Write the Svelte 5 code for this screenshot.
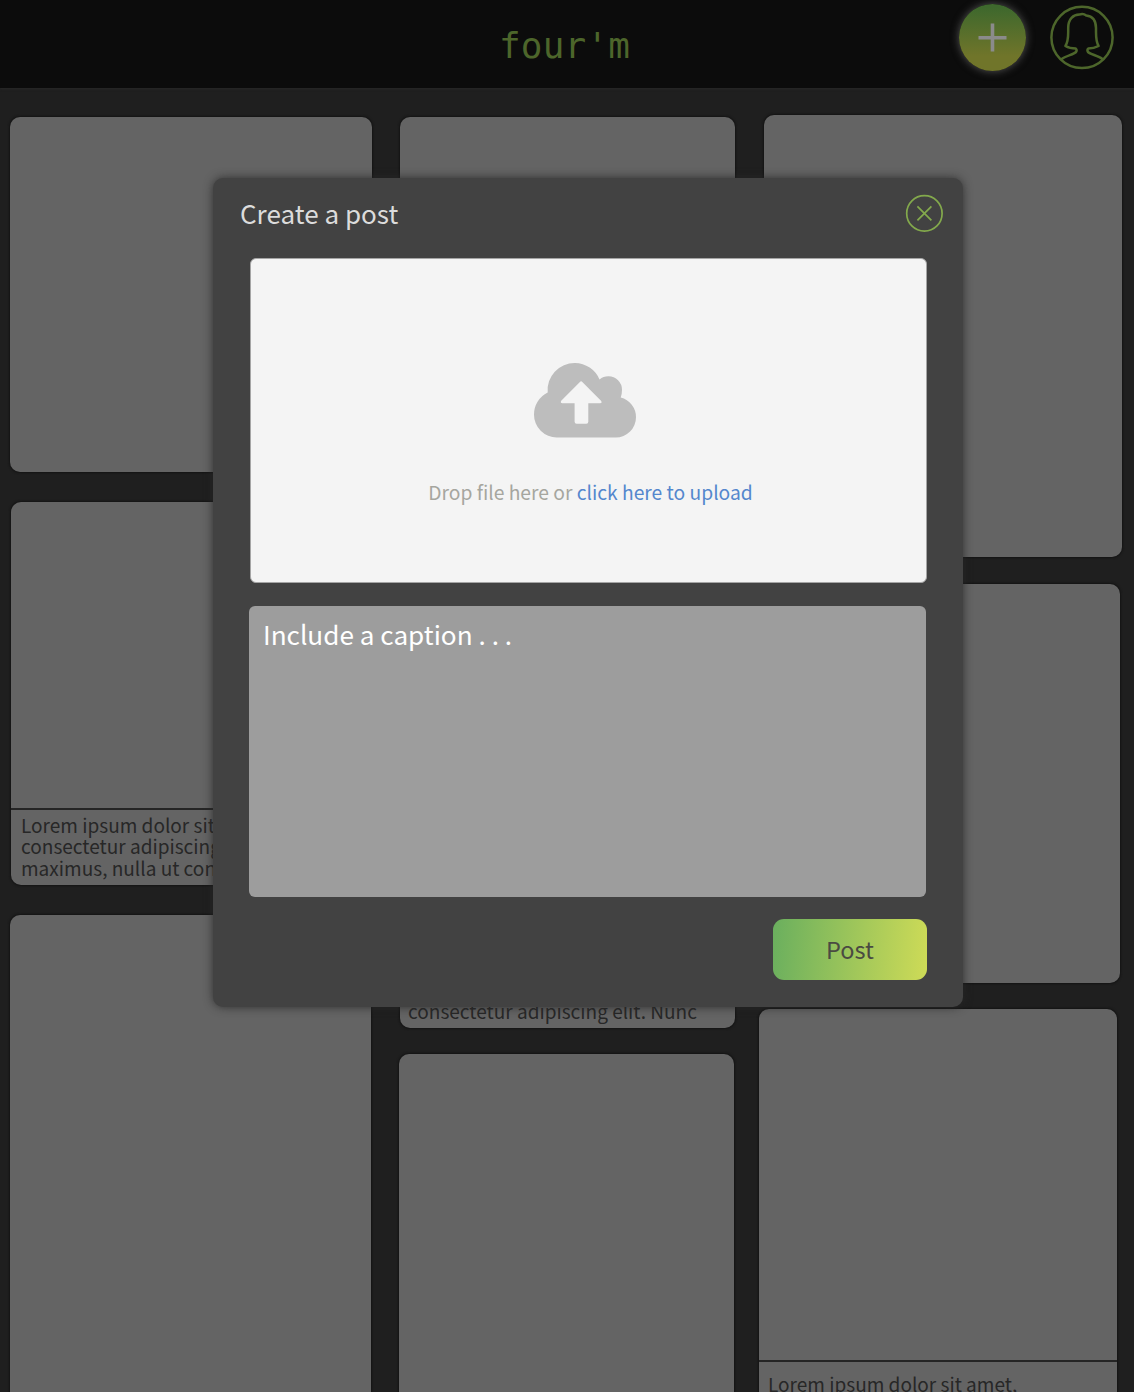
<script>
  const lorem = ['Lorem ipsum dolor sit amet,', 'consectetur adipiscing elit. Nunc', 'maximus, nulla ut convallis'];
  const columns = [
    {
      name: 'left',
      cards: [
        { name: 'a1', lines: [] },
        { name: 'a2', lines: lorem },
        { name: 'a3', lines: [] }
      ]
    },
    {
      name: 'middle',
      cards: [
        { name: 'b1', lines: lorem.slice(1, 2) },
        { name: 'b2', lines: [] }
      ]
    },
    {
      name: 'right',
      cards: [
        { name: 'c1', lines: [] },
        { name: 'c2', lines: [] },
        { name: 'c3', lines: lorem.slice(0, 1) }
      ]
    }
  ];
</script>

<div class="page">
  <header class="topbar">
    <h1 class="logo">four'm</h1>
    <div class="actions">
      <button class="add" aria-label="New post">
        <svg viewBox="0 0 30 30" width="30" height="30"><path d="M14.500 0.500v28M0.500 14.800h28" /></svg>
      </button>
      <button class="avatar" aria-label="Profile">
        <svg viewBox="0 0 64 64" width="64" height="64">
          <circle cx="32" cy="32.400" r="30.600" />
          <path
            d="M11.400 54.200C16 50.600 23.500 49.500 26 47C26.900 45.700 26.700 44.500 25.800 43.600C22.400 43.600 18 42.600 15.400 41C17.700 37.500 18.200 33 18.200 27V23C18.200 14 23.400 9.600 29.400 9.600C31.500 8.800 34.300 9 36.200 10.400C42.400 11 46 15.500 46 23V27C46 33 46.400 37.500 48.600 41C45.600 42.600 41.600 43.600 38.200 43.600C37.300 44.500 37.200 45.700 38 47C40.500 49.500 48.200 50.600 52.600 54.200"
          />
        </svg>
      </button>
    </div>
  </header>

  <main class="feed">
    {#each columns as column}
      <div class="column {column.name}">
        {#each column.cards as card}
          <article class="card {card.name}">
            <div class="media"></div>
            {#if card.lines.length}
              <div class="caption">
                {#each card.lines as line}<div>{line}</div>{/each}
              </div>
            {/if}
          </article>
        {/each}
      </div>
    {/each}
  </main>

  <section class="modal">
    <div class="modal-head">
      <h2>Create a post</h2>
      <button class="close" aria-label="Close">
        <svg viewBox="0 0 38 38" width="38" height="38">
          <circle cx="19.400" cy="19.400" r="17.700" />
          <path d="M12.400 12.400l14 14M26.400 12.400l-14 14" />
        </svg>
      </button>
    </div>
    <div class="dropzone">
      <svg class="cloud" viewBox="0 0 103 75" width="103" height="75">
        <path
          class="shape"
          d="M23 74.500A22.800 22.800 0 0 1 0 51.500A24.500 24.500 0 0 1 13.700 29.500A27 27 0 0 1 41 0A27 27 0 0 1 65.500 16.500A13.500 13.500 0 0 1 74.500 13.200A13.500 13.500 0 0 1 88 26.700Q88 31 86.700 34.500A20.300 20.300 0 0 1 102 54.200A20.300 20.300 0 0 1 81.700 74.500Z"
        />
        <path
          class="arrow"
          d="M45.900 18.900Q47.100 17.700 48.300 18.900L67 37.700Q68.500 40.200 66 40.200H54.300V58.800Q54.300 60.800 52.300 60.800H42.600Q40.600 60.800 40.600 58.800V40.200H28.500Q26 40.200 27.200 37.700Z"
        />
      </svg>
      <p class="hint">Drop file here or <a href="#upload">click here to upload</a></p>
    </div>
    <div class="caption-box">Include a caption . . .</div>
    <button class="post">Post</button>
  </section>
</div>

<style>
  :global(body) {
    margin: 0;
    background: #1f1f1f;
  }
  .page {
    position: relative;
    width: 1134px;
    height: 1392px;
    overflow: hidden;
    background: #1f1f1f;
    font-family: 'Noto Sans CJK SC', 'Noto Sans', sans-serif;
  }
  .page * {
    box-sizing: border-box;
  }
  button {
    padding: 0;
    border: 0;
    background: none;
    font-family: inherit;
  }
  svg {
    display: block;
    fill: none;
    overflow: visible;
  }
  .topbar {
    display: grid;
    grid-template-columns: 499px 130px 1fr;
    height: 88px;
    background: #0c0c0c;
    box-shadow: 0 1px 2px #292929;
  }
  .logo {
    grid-column: 2;
    margin: 0;
    padding-top: 23px;
    font: 400 36px/46px 'DejaVu Sans Mono', monospace;
    letter-spacing: 0.2px;
    color: #4d662b;
    white-space: nowrap;
  }
  .actions {
    display: flex;
    justify-content: flex-end;
    align-items: flex-start;
    gap: 24px;
    padding: 4px 20px 0 0;
  }
  .add {
    display: flex;
    align-items: center;
    justify-content: center;
    width: 67px;
    height: 67px;
    border-radius: 50%;
    background: linear-gradient(#3e682d 5%, #70752a 78%);
    box-shadow: 0 0 9px #555;
  }
  .add svg {
    stroke: #8b8b8b;
    stroke-width: 3.6;
  }
  .avatar {
    margin-top: 1px;
  }
  .avatar svg {
    stroke: #4d662b;
    stroke-width: 2.5;
    stroke-linejoin: round;
  }
  .feed {
    display: flex;
    align-items: flex-start;
    height: 1304px;
    padding: 27px 0 0 10px;
    overflow: hidden;
  }
  .column {
    display: flex;
    flex-direction: column;
    flex: none;
  }
  .left {
    width: 389px;
    padding-top: 2px;
    gap: 30px;
  }
  .middle {
    width: 360px;
    padding-top: 2px;
    gap: 26px;
  }
  .right {
    width: 363px;
    gap: 26px;
  }
  .card {
    display: flex;
    flex: none;
    flex-direction: column;
    border-radius: 10px;
    background: #646464;
    box-shadow: 0 0 2px 1px #141414;
    overflow: hidden;
  }
  .media {
    flex: 1;
  }
  .caption {
    flex: none;
    border-top: 2px solid #252525;
    color: #272727;
    font-size: 19.05px;
    line-height: 21.3px;
    white-space: nowrap;
  }
  .a1 {
    width: 362px;
    height: 355px;
  }
  .a2 {
    width: 360px;
    height: 383px;
    margin-left: 1px;
  }
  .a2 .caption {
    height: 77px;
    padding: 4px 0 0 10px;
  }
  .a3 {
    width: 361px;
    height: 500px;
  }
  .b1 {
    width: 335px;
    height: 911px;
    margin-left: 1px;
  }
  .b1 .caption {
    height: 32px;
    padding: 2px 0 0 8px;
  }
  .b2 {
    width: 335px;
    height: 500px;
  }
  .c1 {
    width: 358px;
    height: 442px;
    margin-left: 5px;
  }
  .c2 {
    width: 357px;
    height: 399px;
    margin: 1px 0 0 4px;
  }
  .c3 {
    width: 358px;
    height: 430px;
  }
  .c3 .caption {
    height: 79px;
    padding: 11px 0 0 9px;
  }
  .modal {
    position: absolute;
    left: 213px;
    top: 178px;
    display: flex;
    flex-direction: column;
    width: 750px;
    height: 829px;
    padding: 0 37px 0 36px;
    border-radius: 10px;
    background: #424242;
    box-shadow: 0 0 10px rgba(40, 40, 40, 0.85);
  }
  .modal-head {
    display: flex;
    justify-content: space-between;
    height: 80px;
    margin: 0 -17px 0 -9px;
    padding-top: 16px;
  }
  h2 {
    margin: 0;
    font-size: 26.05px;
    font-weight: 400;
    line-height: 39px;
    color: #dcdcdc;
  }
  .close {
    height: 38px;
  }
  .close svg {
    stroke: #83a94c;
    stroke-width: 1.7;
  }
  .dropzone {
    display: flex;
    flex-direction: column;
    align-items: center;
    height: 325px;
    margin: 0 -1px 0 1px;
    padding-top: 104px;
    border: 1px solid #a5a5a5;
    border-radius: 6px;
    background: #f4f4f4;
  }
  .cloud {
    margin-right: 6px;
  }
  .shape {
    fill: #bdbdbd;
  }
  .arrow {
    fill: #f4f4f4;
  }
  .hint {
    margin: 39px 0 0 4px;
    font-size: 19.25px;
    line-height: 30px;
    color: #a6a69f;
    white-space: nowrap;
  }
  .hint a {
    color: #5487cd;
    text-decoration: none;
  }
  .caption-box {
    height: 291px;
    margin-top: 23px;
    padding: 9px 14px;
    border-radius: 6px;
    background: #9d9d9d;
    color: #fff;
    font-size: 26.15px;
    line-height: 39px;
  }
  .post {
    align-self: flex-end;
    width: 154px;
    height: 61px;
    margin: 22px -1px 0 0;
    border-radius: 11px;
    background: linear-gradient(95deg, #6aaf5e, #cedb57);
    color: #4a4a42;
    font-size: 23.5px;
    line-height: 61px;
  }
</style>
